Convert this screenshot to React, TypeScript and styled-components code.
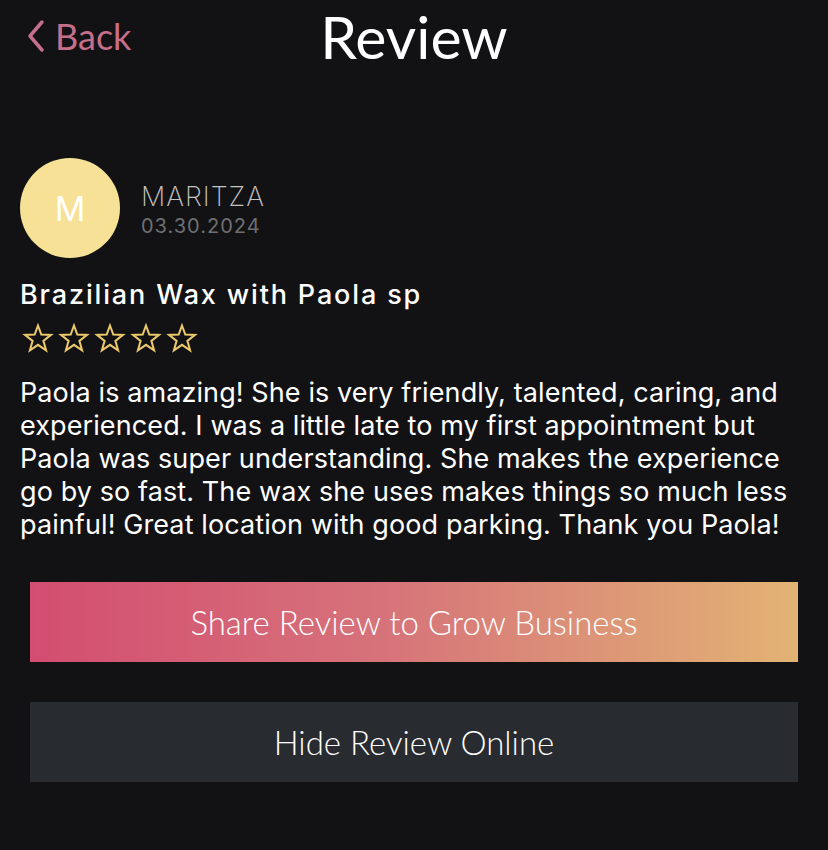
import React from 'react';
import styled, { createGlobalStyle } from 'styled-components';

const GlobalStyle = createGlobalStyle`
  html, body {
    margin: 0;
    padding: 0;
    background: #121214;
  }
  * {
    box-sizing: border-box;
  }
`;

const review = {
  initial: 'M',
  name: 'MARITZA',
  date: '03.30.2024',
  service: 'Brazilian Wax with Paola sp',
  text: 'Paola is amazing! She is very friendly, talented, caring, and experienced. I was a little late to my first appointment but Paola was super understanding. She makes the experience go by so fast. The wax she uses makes things so much less painful! Great location with good parking. Thank you Paola!',
};

const StarIcon = () => (
  <svg width="32" height="30" viewBox="0 0 32 30">
    <path
      d="M16 2.5 L19.3 11.6 L29 11.9 L21.4 17.9 L24.1 27.3 L16 21.8 L7.9 27.3 L10.6 17.9 L3 11.9 L12.7 11.6 Z"
      fill="none"
      stroke="#ecc96a"
      strokeWidth="2"
      strokeLinejoin="miter"
    />
  </svg>
);

const App = () => {
  return (
    <Page>
      <GlobalStyle />
      <Header>
        <BackButton>
          <svg width="22" height="34" viewBox="0 0 22 34">
            <path d="M17 3 L5 17 L17 31" fill="none" stroke="#c56f8b" strokeWidth="3.5" strokeLinecap="round" strokeLinejoin="round" />
          </svg>
          <span>Back</span>
        </BackButton>
        <Title>Review</Title>
        <div />
      </Header>

      <Content>
        <Author>
          <Avatar>{review.initial}</Avatar>
          <AuthorInfo>
            <AuthorName>{review.name}</AuthorName>
            <ReviewDate>{review.date}</ReviewDate>
          </AuthorInfo>
        </Author>

        <Service>{review.service}</Service>
        <Stars>
          {[0, 1, 2, 3, 4].map((i) => (
            <StarIcon key={`star_${i}`} />
          ))}
        </Stars>
        <ReviewText>{review.text}</ReviewText>
      </Content>

      <Actions>
        <ActionButton $variant="gradient">Share Review to Grow Business</ActionButton>
        <ActionButton $variant="dark">Hide Review Online</ActionButton>
      </Actions>
    </Page>
  );
};

export default App;

const Page = styled.div`
  width: 828px;
  min-height: 850px;
  background: #121214;
  color: #ffffff;
`;

const Header = styled.div`
  display: grid;
  grid-template-columns: 1fr auto 1fr;
  align-items: center;
  height: 80px;
  padding: 0 25px;
`;

const BackButton = styled.div`
  display: flex;
  align-items: center;
  gap: 8px;
  color: #c56f8b;
  font-family: Lato, 'Liberation Sans', sans-serif;
  font-size: 36px;
  font-weight: 400;
  margin-top: -8px;
`;

const Title = styled.div`
  font-family: Lato, 'Liberation Sans', sans-serif;
  font-size: 59px;
  font-weight: 400;
  color: #ffffff;
  line-height: 1;
  margin-top: -8px;
`;

const Content = styled.div`
  padding: 78px 20px 0 20px;
`;

const Author = styled.div`
  display: flex;
  align-items: center;
  gap: 21px;
`;

const Avatar = styled.div`
  width: 100px;
  height: 100px;
  border-radius: 50%;
  background: #f6e196;
  color: #ffffff;
  display: flex;
  align-items: center;
  justify-content: center;
  font-family: Inter, 'Liberation Sans', sans-serif;
  font-size: 34px;
  font-weight: 400;
`;

const AuthorInfo = styled.div`
  display: flex;
  flex-direction: column;
  gap: 2px;
  margin-top: 4px;
`;

const AuthorName = styled.div`
  font-family: Inter, 'Liberation Sans', sans-serif;
  font-size: 27px;
  font-weight: 200;
  letter-spacing: 1px;
  color: #c4c4c4;
  line-height: 1.1;
`;

const ReviewDate = styled.div`
  font-family: Inter, 'Liberation Sans', sans-serif;
  font-size: 20px;
  font-weight: 400;
  letter-spacing: 1px;
  color: #6f6f72;
`;

const Service = styled.div`
  margin-top: 20px;
  font-family: Inter, 'Liberation Sans', sans-serif;
  font-size: 27px;
  font-weight: 500;
  letter-spacing: 1.85px;
  color: #ffffff;
`;

const Stars = styled.div`
  display: flex;
  gap: 4px;
  margin-top: 12px;
  margin-left: 2px;
`;

const ReviewText = styled.p`
  margin: 23px 0 0 0;
  font-family: Inter, 'Liberation Sans', sans-serif;
  font-size: 27px;
  letter-spacing: 0.1px;
  line-height: 33px;
  color: #ffffff;
`;

const Actions = styled.div`
  display: flex;
  flex-direction: column;
  gap: 40px;
  padding: 41px 30px 0 30px;
`;

const ActionButton = styled.div<{ $variant: 'gradient' | 'dark' }>`
  height: 80px;
  display: flex;
  align-items: center;
  justify-content: center;
  font-family: Lato, 'Liberation Sans', sans-serif;
  font-size: 33px;
  font-weight: 300;
  color: #ffffff;
  background: ${({ $variant }) =>
    $variant === 'gradient' ? 'linear-gradient(90deg, #d34d70 0%, #d6727a 45%, #e2b374 100%)' : '#282b30'};
`;
